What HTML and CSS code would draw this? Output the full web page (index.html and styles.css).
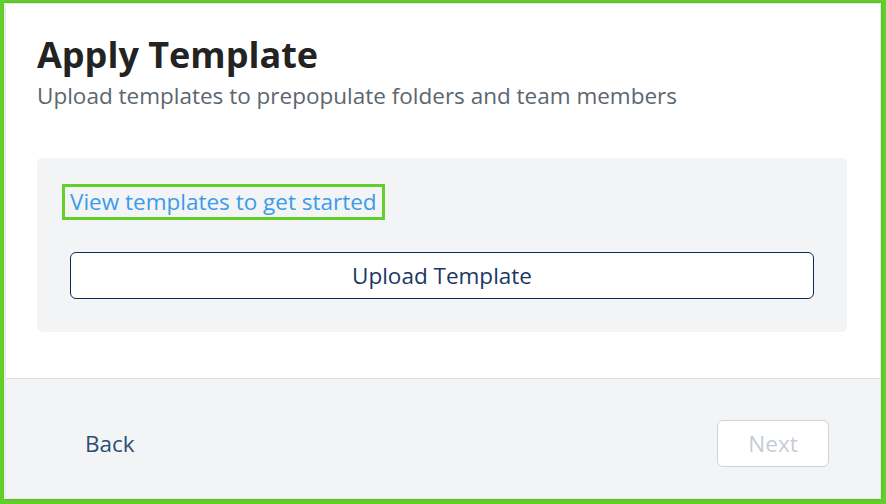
FILE: index.html
```html
<!DOCTYPE html>
<html>
<head>
<meta charset="utf-8">
<link rel="stylesheet" href="styles.css">
</head>
<body>
<div class="frame">
  <div class="card">
    <div class="content">
      <h1 class="title">Apply Template</h1>
      <p class="subtitle">Upload templates to prepopulate folders and team members</p>
      <div class="panel">
        <a class="link" href="#">View templates to get started</a>
        <button class="upload">Upload Template</button>
      </div>
    </div>
    <div class="footer">
      <button class="back">Back</button>
      <button class="next" disabled>Next</button>
    </div>
  </div>
</div>
</body>
</html>
```
FILE: styles.css
```css
* { box-sizing: border-box; }
html, body { margin: 0; padding: 0; }
body {
  width: 886px;
  height: 504px;
  font-family: "Open Sans", "Noto Sans", sans-serif;
  background: #ffffff;
}
.frame {
  width: 886px;
  height: 504px;
  border: 4px solid #63cf2a;
  border-right-width: 5px;
  border-bottom-width: 5px;
  border-top-width: 3px;
  padding: 1px 1px 1px 2px;
  display: flex;
}
.card {
  flex: 1;
  display: flex;
  flex-direction: column;
  background: #ffffff;
  box-shadow: 0 0 3px 1px rgba(0,0,0,0.16);
}
.content {
  flex: 1;
  padding: 27px 33px 0 31px;
  border-bottom: 1px solid #dcdcdc;
}
.title {
  margin: 0;
  font-size: 36px;
  font-weight: 700;
  color: #232323;
  line-height: 48px;
}
.subtitle {
  margin: 2px 0 0 0;
  font-size: 22.5px;
  color: #5b6670;
  line-height: 30px;
}
.panel {
  margin-top: 47px;
  background: #f3f4f6;
  border-radius: 5px;
  padding: 26px 33px 33px 25px;
  display: flex;
  flex-direction: column;
  align-items: flex-start;
}
.link {
  display: inline-block;
  font-size: 22.5px;
  color: #3d9be9;
  text-decoration: none;
  line-height: 30px;
  padding: 0 5px 0 5px;
  border: 3px solid #63cf2a;
}
.upload {
  margin-top: 32px;
  margin-left: 8px;
  align-self: stretch;
  height: 47px;
  background: #ffffff;
  border: 1.5px solid #0d2c59;
  border-radius: 6px;
  font-family: inherit;
  font-size: 22.5px;
  color: #1b3761;
  cursor: pointer;
}
.footer {
  height: 119px;
  background: #f3f4f6;
  display: flex;
  align-items: center;
  justify-content: space-between;
  padding: 10px 51px 0 79px;
}
.back {
  background: none;
  border: none;
  padding: 0;
  font-family: inherit;
  font-size: 22.5px;
  color: #2b4d78;
}
.next {
  width: 112px;
  height: 47px;
  background: #ffffff;
  border: 1px solid #cdd4db;
  border-radius: 6px;
  font-family: inherit;
  font-size: 22.5px;
  color: #c6cdd4;
}
```
